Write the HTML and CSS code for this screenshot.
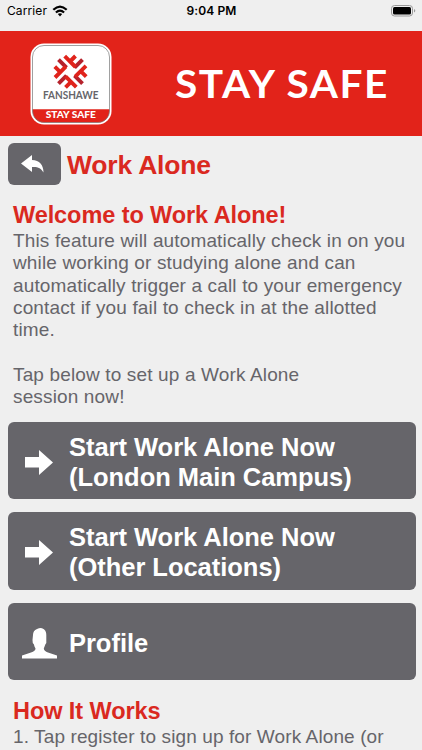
FILE: index.html
```html
<!DOCTYPE html>
<html lang="en">
<head>
<meta charset="utf-8">
<title>Work Alone</title>
<link rel="stylesheet" href="styles.css">
</head>
<body>
<div class="status">
  <div class="carrier"><span>Carrier</span>
    <svg width="16" height="12" viewBox="0 0 16 12"><g fill="none" stroke="#000" stroke-width="2.2"><path d="M1.3 4.8Q8-1.7 14.7 4.8"/><path d="M3.9 7.5Q8 3.7 12.1 7.5"/></g><path d="M5.8 9.1Q8 7.5 10.2 9.1L8 11.4Z"/></svg>
  </div>
  <span class="time">9:04 PM</span>
  <svg class="battery" width="25" height="12" viewBox="0 0 25 12"><rect x=".5" y=".5" width="21" height="10.5" rx="3" fill="none" stroke="#999"/><rect x="2" y="2" width="18" height="7.5" rx="1.5"/><path d="M23 4v3.5q1.3-.4 1.3-1.75T23 4" fill="#999"/></svg>
</div>
<header class="banner">
  <svg class="logo" width="82" height="82" viewBox="0 0 82 82">
    <defs>
      <clipPath id="tile"><rect x="2.5" y="2.5" width="77" height="77" rx="11.5"/></clipPath>
      <g id="arm"><path d="M4-4L12-12" stroke="#b5222c"/><path d="M-5.800-15.500L5-4.700M-.5-10.200L5-15.700" stroke="#e0231b"/></g>
    </defs>
    <rect x=".5" y=".5" width="81" height="81" rx="13.5" fill="#fff"/>
    <path d="M2 66.3H80V81H2Z" fill="#e2231a" clip-path="url(#tile)"/>
    <rect x="2.5" y="2.5" width="77" height="77" rx="11.5" fill="none" stroke="#777" stroke-width=".7"/>
    <g transform="translate(40.500 28.700)" stroke-width="3.900" fill="none">
      <use href="#arm"/><use href="#arm" transform="rotate(90)"/><use href="#arm" transform="rotate(180)"/><use href="#arm" transform="rotate(270)"/>
    </g>
    <text x="13" y="56.2" class="brand" textLength="55.5" lengthAdjust="spacingAndGlyphs">FANSHAWE</text>
    <text x="15.8" y="75.4" class="tag" textLength="50" lengthAdjust="spacingAndGlyphs">STAY SAFE</text>
  </svg>
  <svg class="title" width="230" height="60" viewBox="0 0 230 60"><text x="8" y="43" textLength="214" lengthAdjust="spacingAndGlyphs">STAY SAFE</text></svg>
</header>
<main>
  <div class="heading">
    <div class="back"><svg width="24" height="18" viewBox="0 0 24 18"><path d="M0 8.500L11 0V5C18.500 5 22.500 10 22.500 17.500C20 13 16.500 11.500 11 12V17Z" fill="#fff"/></svg></div>
    <h1>Work Alone</h1>
  </div>
  <section class="intro">
    <h2 class="welcome">Welcome to Work Alone!</h2>
    <p>This feature will automatically check in on you<br>while working or studying alone and can<br>automatically trigger a call to your emergency<br>contact if you fail to check in at the allotted<br>time.<br><br>Tap below to set up a Work Alone<br>session now!</p>
  </section>
  <div class="buttons">
    <div class="button"><svg width="36" height="30" viewBox="0 0 36 30"><path d="M3 10H17V3L31 15.500L17 28V20.500H3Z" fill="#fff"/></svg><span>Start Work Alone Now<br>(London Main Campus)</span></div>
    <div class="button"><svg width="36" height="30" viewBox="0 0 36 30"><path d="M3 10H17V3L31 15.500L17 28V20.500H3Z" fill="#fff"/></svg><span>Start Work Alone Now<br>(Other Locations)</span></div>
    <div class="button"><svg width="36" height="32" viewBox="0 0 36 32"><path d="M0 31.500V28.500L9 25.500Q13.500 24 13.500 21.500Q12 19 12 17.500Q10.300 16.500 10.500 13L11 8Q11 3.500 15 2Q18 .5 20 1.200Q24.500 3 24.300 8V13Q24.800 16 23.300 17.500L21.800 21.500Q22 24 26 25.500L35 28.500V31.500Z" fill="#fff"/></svg><span>Profile</span></div>
  </div>
  <section class="how"><h2>How It Works</h2><p>1. Tap register to sign up for Work Alone (or</p></section>
</main>
</body>
</html>
```
FILE: styles.css
```css
* { box-sizing: border-box; }
body { margin: 0; height: 750px; overflow: hidden; background: #efefef; font-family: "Liberation Sans", Arial, sans-serif; color: #66656a; }
svg { display: block; flex: none; }
h1, h2, p { margin: 0; white-space: nowrap; }
h1, h2 { color: #da291f; font-weight: bold; }
.status { height: 31px; display: grid; grid-template-columns: 1fr auto 1fr; align-items: center; padding: 0 6px 9px 7px; color: #000; font: 12px/22px Inter, sans-serif; }
.carrier { display: flex; align-items: center; gap: 5px; letter-spacing: .1px; }
.time { font-weight: 600; letter-spacing: .1px; }
.battery { justify-self: end; }
.banner { height: 105px; background: #e2231a; display: flex; padding: 12px 0 0 30px; }
.logo { margin-top: -.5px; margin-left: -.5px; }
.brand { font: bold 10.500px Lato, sans-serif; fill: #66656a; }
.tag { font: 900 9.700px Lato, sans-serif; fill: #fff; }
.title { margin: 11.500px 0 0 55px; }
.title text { font: bold 38px Lato, sans-serif; letter-spacing: 1.500px; fill: #fff; }
.heading { display: flex; padding: 7px 8px 0; gap: 6px; height: 65px; }
.back { width: 53px; height: 42px; border-radius: 6px; background: #66656a; padding: 12px 0 0 13px; }
h1 { font-size: 26.500px; line-height: 44px; letter-spacing: -.2px; }
.intro { padding-left: 13px; height: 220.500px; }
h2 { font-size: 23.500px; line-height: 28px; letter-spacing: -.08px; }
.intro h2 { line-height: 29px; }
p { font-size: 19px; line-height: 22.300px; letter-spacing: .145px; }
.buttons { display: grid; gap: 13px; padding: 0 6px 0 8px; }
.button { height: 77.500px; border-radius: 6px; background: #66656a; color: #fff; font-weight: bold; font-size: 25.500px; line-height: 30px; letter-spacing: -.03px; display: flex; align-items: center; gap: 11px; padding: 3px 0 0 14px; white-space: nowrap; }
.how { padding: 17px 0 0 13px; }
.how p { letter-spacing: .11px; padding-top: .5px; }
```
